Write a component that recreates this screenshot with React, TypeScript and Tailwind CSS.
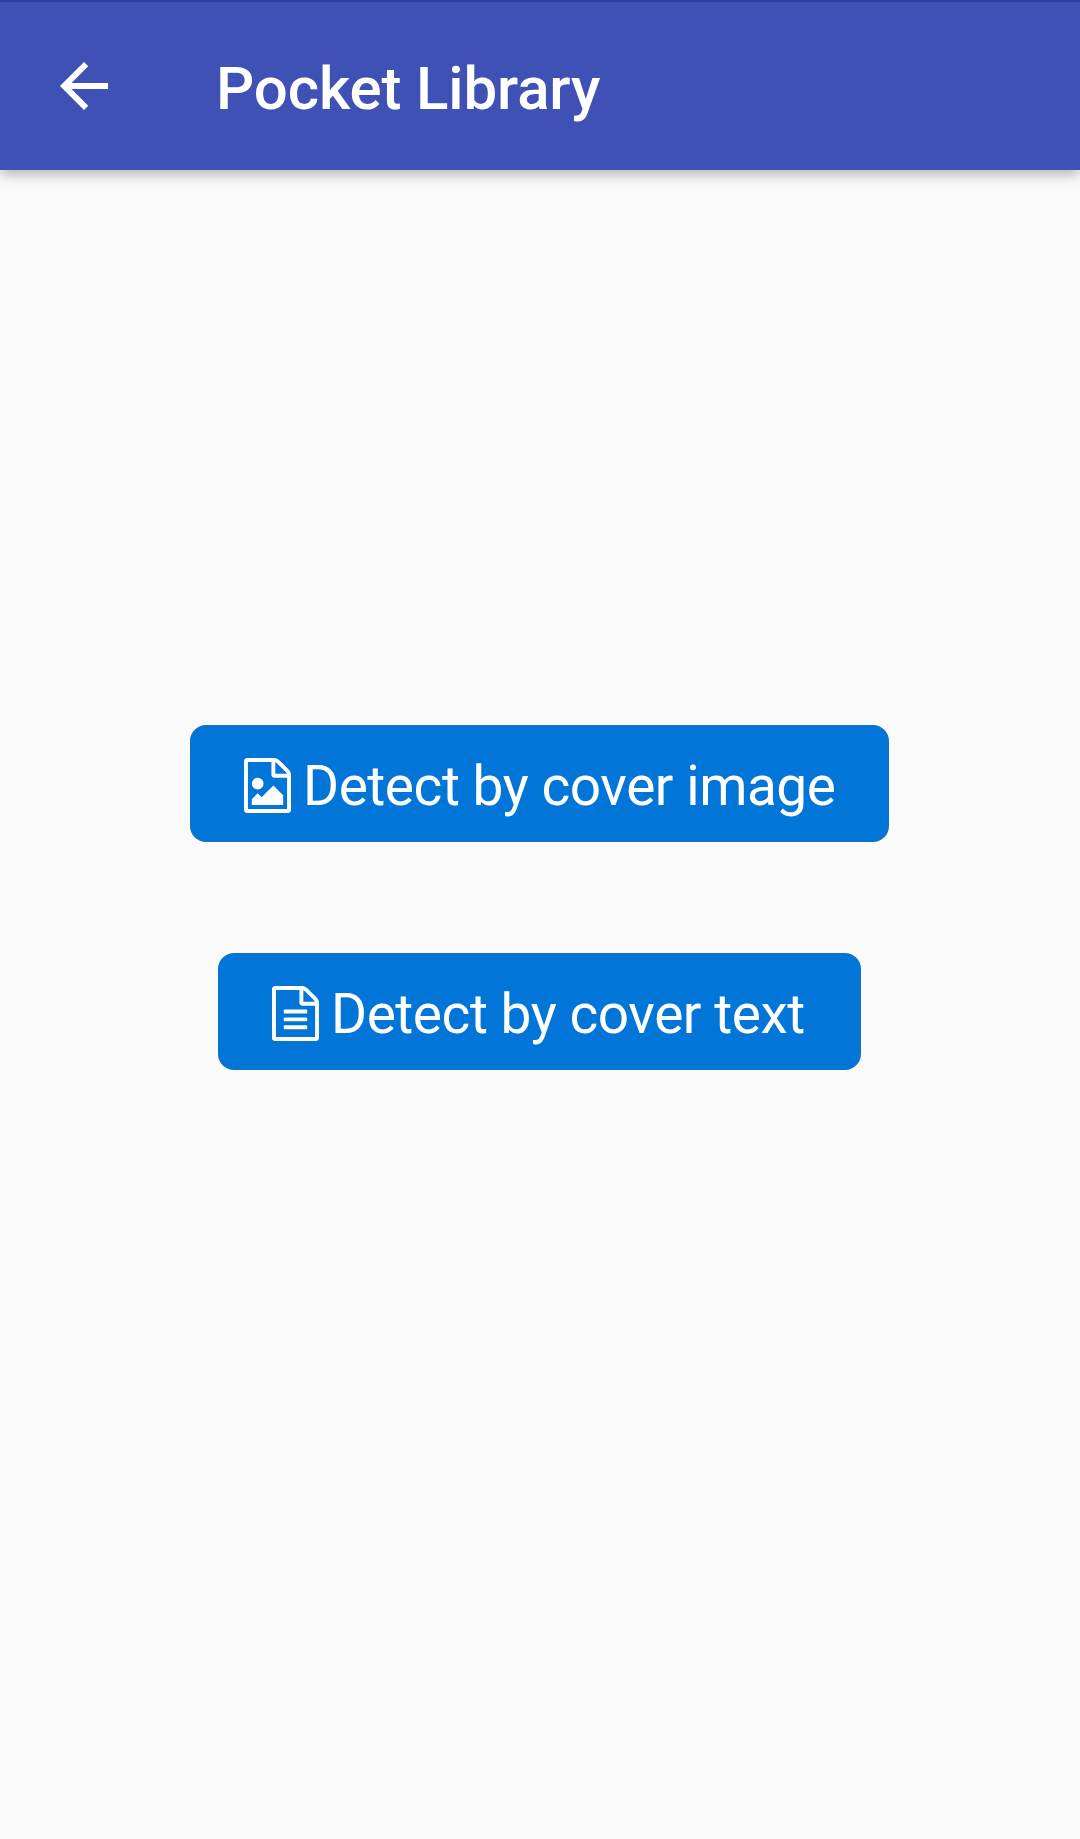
import type { ReactNode } from "react";

const page =
  "M1596 380q28 28 48 76t20 88v1152q0 40-28 68t-68 28h-1344q-40 0-68-28t-28-68v-1600q0-40 28-68t68-28h896q40 0 88 20t76 48zm-444-244v376h376q-10-29-22-41l-313-313q-12-12-41-22zm384 1528v-1024h-416q-40 0-68-28t-28-68v-416h-768v1536h1280z";
const picture =
  "M1408 1216v320h-1024v-192l192-192 128 128 384-384zm-832-192q-80 0-136-56t-56-136 56-136 136-56 136 56 56 136-56 136-136 56z";
const lines =
  "M512 800q0-14 9-23t23-9h704q14 0 23 9t9 23v64q0 14-9 23t-23 9h-704q-14 0-23-9t-9-23v-64zm736 224q14 0 23 9t9 23v64q0 14-9 23t-23 9h-704q-14 0-23-9t-9-23v-64q0-14 9-23t23-9h704zm0 256q14 0 23 9t9 23v64q0 14-9 23t-23 9h-704q-14 0-23-9t-9-23v-64q0-14 9-23t23-9h704z";

function FileIcon({ content }: { content: string }) {
  return (
    <svg viewBox="128 0 1536 1792" className="mt-[3px] h-[55px] w-[47px] shrink-0" fill="currentColor" aria-hidden="true">
      <path d={page} />
      <path d={content} />
    </svg>
  );
}

function DetectButton({ icon, width, children }: { icon: string; width: string; children: ReactNode }) {
  return (
    <button
      className={`flex h-[117px] items-center rounded-[16px] border-2 border-[#0b72cf] bg-[#0275d8] pl-[52px] text-[55px] leading-[64px] whitespace-nowrap text-white ${width}`}
    >
      <span className="flex items-center gap-[12px] pt-px">
        <FileIcon content={icon} />
        <span className="pt-[4px] tracking-[-0.46px]">{children}</span>
      </span>
    </button>
  );
}

export default function App() {
  return (
    <div className="flex h-[1839px] w-[1080px] flex-col bg-[#fafafa] font-['Roboto',sans-serif]">
      <header className="flex h-[170px] shrink-0 items-center border-t-2 border-[#303f9f] bg-[#3f51b5] pl-12 text-white shadow-[0_5px_12px_rgba(0,0,0,0.27)]">
        <button aria-label="Back" className="size-[72px]">
          <svg viewBox="0 0 24 24" className="size-[72px]" fill="currentColor">
            <path d="M20 11H7.83l5.59-5.59L12 4l-8 8 8 8 1.41-1.41L7.83 13H20v-2z" />
          </svg>
        </button>
        <h1 className="mt-[6px] ml-[96px] text-[60px] leading-[70px] font-medium tracking-[-0.13px]">Pocket Library</h1>
      </header>
      <main className="flex w-[1079px] flex-col items-center gap-[111px] pt-[555px]">
        <DetectButton icon={picture} width="w-[699px]">Detect by cover image</DetectButton>
        <DetectButton icon={lines} width="w-[643px]">Detect by cover text</DetectButton>
      </main>
    </div>
  );
}
